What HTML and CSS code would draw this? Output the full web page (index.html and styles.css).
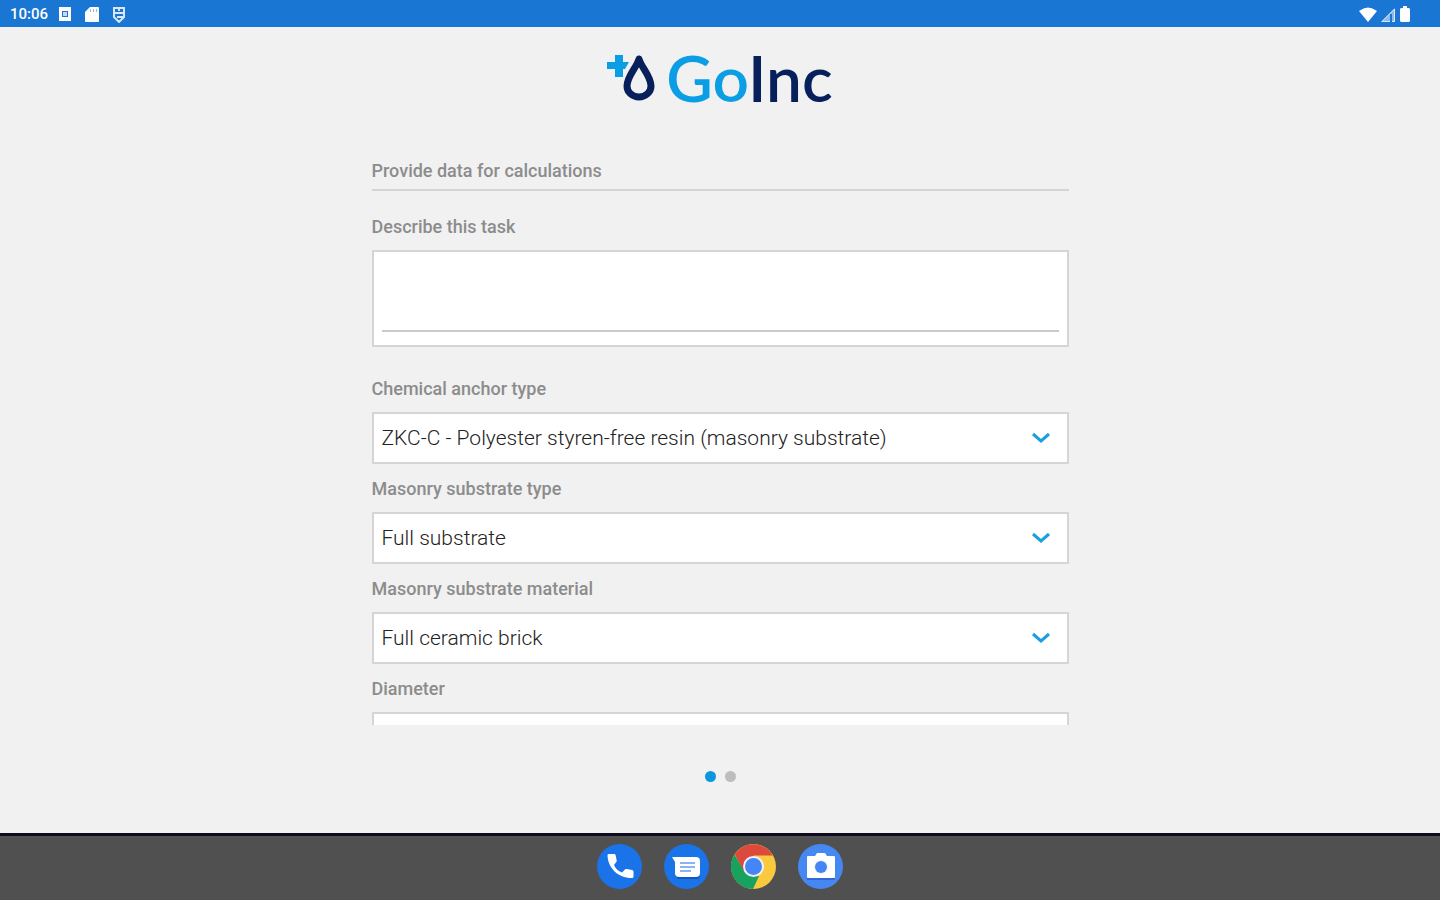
FILE: index.html
```
<!DOCTYPE html>
<html lang="en">
<head>
    <meta charset="UTF-8">
    <meta name="viewport" content="width=device-width, initial-scale=1.0">
    <title>GoInc</title>
    <link rel="stylesheet" href="styles.css">
</head>
<body>
    <div class="status-bar">
        <div class="status-left">
            <span class="clock">10:06</span>
            <svg width="14" height="16" viewBox="0 0 14 16"><path fill="#fff" fill-rule="evenodd" d="M1 1h12v14H1zM4 5v6h6V5z"/><path fill="#c3d9f4" d="M5 6h4v4H5z"/></svg>
            <svg width="14" height="16" viewBox="0 0 14 16"><path fill="#fff" d="M5 1h8a1 1 0 0 1 1 1v13a1 1 0 0 1-1 1H1a1 1 0 0 1-1-1V6z"/><path fill="#8db8e9" d="M5 3h1v3H5zM8 3h1v3H8zM11 3h1v3h-1z"/></svg>
            <svg width="14" height="17" viewBox="0 0 14 17" fill="none" stroke="#d8e7fa" stroke-width="2"><path d="M2 2h10v9l-5 5-5-5zM2 7h10M5 11h6M7 2v3"/></svg>
        </div>
        <div class="status-right">
            <svg width="18" height="15" viewBox="0 0 18 15"><path fill="#fff" d="M0 4Q9-3 18 4L9 15z"/></svg>
            <svg width="15" height="15" viewBox="0 0 15 15"><path fill="#8fb9ea" d="M0 15L14 1v14z"/><path fill="none" stroke="#d8e7fa" stroke-width="1" d="M1 14.5L13.5 2v12.5z"/><path stroke="#1976d2" stroke-width="2" d="M10 7v8"/></svg>
            <svg width="10" height="16" viewBox="0 0 10 16"><path fill="#fff" d="M3 0h4v2h2l1 1v12l-1 1H1l-1-1V3l1-1h2z"/></svg>
        </div>
    </div>

    <header class="logo">
        <svg class="logo-mark" width="50" height="48" viewBox="0 0 50 48">
            <path fill="#0c9ee4" d="M8 1h8v7h6l-4 7h-2v8H8v-8H0V8h8z"/>
            <path fill="none" stroke="#07205c" stroke-width="7" stroke-linejoin="round" d="M32 5C30 13 20 22 20 32a12 11 0 0 0 24 0C44 22 34 13 32 5z"/>
        </svg>
        <span class="logo-text"><span class="logo-go">Go</span>Inc</span>
    </header>

    <main class="content">
        <form class="form">
            <h1>Provide data for calculations</h1>

            <label for="task">Describe this task</label>
            <div class="text-box">
                <textarea id="task"></textarea>
            </div>

            <label for="anchor">Chemical anchor type</label>
            <div class="select-box">
                <select id="anchor"><option>ZKC-C - Polyester styren-free resin (masonry substrate)</option></select>
                <svg width="20" height="14" viewBox="0 0 20 14"><path d="M2 3l8 7 8-7"/></svg>
            </div>

            <label for="substrate">Masonry substrate type</label>
            <div class="select-box">
                <select id="substrate"><option>Full substrate</option></select>
                <svg width="20" height="14" viewBox="0 0 20 14"><path d="M2 3l8 7 8-7"/></svg>
            </div>

            <label for="material">Masonry substrate material</label>
            <div class="select-box">
                <select id="material"><option>Full ceramic brick</option></select>
                <svg width="20" height="14" viewBox="0 0 20 14"><path d="M2 3l8 7 8-7"/></svg>
            </div>

            <label for="diameter">Diameter</label>
            <div class="select-box">
                <select id="diameter"><option></option></select>
                <svg width="20" height="14" viewBox="0 0 20 14"><path d="M2 3l8 7 8-7"/></svg>
            </div>
        </form>
    </main>

    <div class="pager">
        <button class="dot active" aria-label="Page 1"></button>
        <button class="dot" aria-label="Page 2"></button>
    </div>

    <nav class="dock">
        <a href="#" aria-label="Phone">
            <svg width="45" height="45" viewBox="0 0 45 45">
                <circle cx="22.500" cy="22.500" r="22.500" fill="#1a73e8"/>
                <path fill="#fff" d="M12 10h5c1 0 1.500.5 1.700 1.500l1 5c0 1-.2 1.500-.8 2L17 21c2 4 4 6 8 7.500l3-3c.5-.5 1-.6 2-.4l5 1c1 .3 1.500 1 1.500 2V32.500c0 1-.8 1.500-1.800 1.500C21 34 11 24 10.500 11.500c0-1 .5-1.500 1.500-1.500z"/>
            </svg>
        </a>
        <a href="#" aria-label="Messages">
            <svg width="45" height="45" viewBox="0 0 45 45">
                <circle cx="22.500" cy="22.500" r="22.500" fill="#1a73e8"/>
                <path fill="#1557b8" d="M11 31l3 4h20l2-3V17z"/>
                <path fill="#fff" d="M8 13h24a4 4 0 0 1 4 4v12a4 4 0 0 1-4 4H15a4 4 0 0 1-4-4V18z"/>
                <path stroke="#8ab4f2" stroke-width="2" d="M16 19h15M16 23h15M16 27h11"/>
            </svg>
        </a>
        <a href="#" aria-label="Chrome">
            <svg width="45" height="45" viewBox="0 0 45 45">
                <circle cx="22.500" cy="22.500" r="22.500" fill="#fbc93d"/>
                <path fill="#dc4a3d" d="M3.700 10.200A22.500 22.500 0 0 1 41.900 11.500H22.500v11l-9.500 6z"/>
                <path fill="#18a15f" d="M3.500 10.500L13.500 28 28 32l-6 13A22.500 22.500 0 0 1 3.500 10.500z"/>
                <circle cx="22.500" cy="22.500" r="10.500" fill="#f1f1f1"/>
                <circle cx="22.500" cy="22.500" r="8.500" fill="#4486f5"/>
            </svg>
        </a>
        <a href="#" aria-label="Camera">
            <svg width="45" height="45" viewBox="0 0 45 45">
                <circle cx="22.500" cy="22.500" r="22.500" fill="#4688f1"/>
                <path fill="#3268cf" d="M9 34h28v2H9z"/>
                <path fill="#fff" d="M10 12h7l2-3h8l2 3h7q1 0 1 1v20q0 1-1 1H10q-1 0-1-1V13q0-1 1-1z"/>
                <circle cx="23" cy="23" r="7" fill="#eef3fb"/>
                <circle cx="23" cy="23" r="6" fill="#4486f5"/>
            </svg>
        </a>
    </nav>
</body>
</html>
```
FILE: styles.css
```
* {
    box-sizing: border-box;
}

body {
    margin: 0;
    height: 100vh;
    display: flex;
    flex-direction: column;
    background-color: #f1f1f1;
    font-family: Roboto, sans-serif;
}

svg {
    display: block;
}

.status-bar {
    display: flex;
    justify-content: space-between;
    height: 27px;
    padding: 1px 30px 0 10px;
    background-color: #1976d2;
    color: #fff;
}

.status-left,
.status-right {
    display: flex;
    align-items: center;
}

.status-left {
    gap: 13px;
}

.status-right {
    gap: 4px;
}

.clock {
    font-size: 15px;
    font-weight: 500;
    margin-right: -3px;
}

.logo {
    display: flex;
    justify-content: center;
    gap: 9px;
    height: 100px;
    padding-top: 27px;
}

.logo-text {
    font-family: Lato, sans-serif;
    font-size: 64px;
    font-weight: 600;
    line-height: 48px;
    color: #07205c;
}

.logo-go {
    color: #0c9ee4;
}

.content {
    flex: 1;
    min-height: 0;
    padding: 34px 20px 0;
    overflow-y: auto;
    scrollbar-width: none;
}

.form {
    display: flex;
    flex-direction: column;
    max-width: 697px;
    margin: 0 auto;
}

h1,
label {
    margin: 0;
    font-size: 18px;
    font-weight: 500;
    line-height: 20px;
    color: #8c8c8c;
}

h1 {
    padding-bottom: 8px;
    border-bottom: 2px solid #d5d5d5;
    margin-bottom: 26px;
}

label {
    margin-bottom: 13px;
}

.text-box {
    padding: 0 8px 13px;
    margin-bottom: 32px;
    background-color: #fff;
    border: 2px solid #d5d5d5;
}

textarea {
    display: block;
    width: 100%;
    height: 80px;
    padding: 8px 0;
    border: none;
    border-bottom: 2px solid #cacaca;
    outline: none;
    resize: none;
    font-family: inherit;
    font-size: 21px;
}

.select-box {
    display: grid;
    align-items: center;
    margin-bottom: 15px;
}

.select-box select,
.select-box svg {
    grid-area: 1 / 1;
}

.select-box select {
    appearance: none;
    width: 100%;
    height: 52px;
    padding: 0 48px 0 8px;
    background-color: #fff;
    border: 2px solid #d5d5d5;
    border-radius: 0;
    font-family: inherit;
    font-size: 21px;
    font-weight: 300;
    color: #222;
}

.select-box svg {
    justify-self: end;
    margin-right: 18px;
    fill: none;
    stroke: #1b9fe0;
    stroke-width: 3px;
    pointer-events: none;
}

.pager {
    display: flex;
    justify-content: center;
    gap: 9px;
    height: 108px;
    padding-top: 46px;
}

.dot {
    width: 11px;
    height: 11px;
    padding: 0;
    border: none;
    border-radius: 50%;
    background-color: #bdbdbd;
}

.dot.active {
    background-color: #0c96e0;
}

.dock {
    display: flex;
    justify-content: center;
    align-items: flex-start;
    gap: 22px;
    height: 67px;
    padding-top: 8px;
    background-color: #505051;
    border-top: 3px solid #0e0b1e;
}
```
